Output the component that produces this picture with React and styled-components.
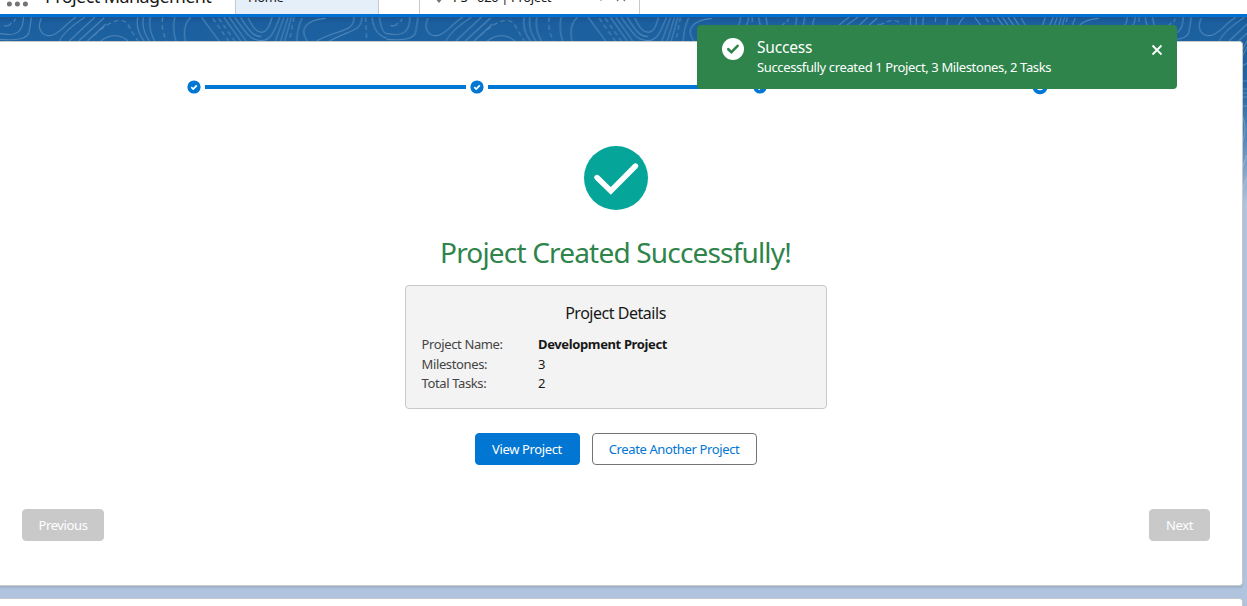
import React from "react";
import styled, { createGlobalStyle, css } from "styled-components";

const Global = createGlobalStyle`
  *, *::before, *::after { box-sizing: border-box; }
  html, body { margin: 0; padding: 0; height: 606px; overflow: hidden; background: #b0c4df; }
  body {
    font-family: "Noto Sans", "Open Sans", sans-serif;
    font-size: 13px;
    line-height: 19.5px;
    letter-spacing: -0.37px;
    color: #181818;
  }
  button { font-family: inherit; }
`;

const Page = styled.div`
  position: relative;
  width: 1247px;
  height: 606px;
  overflow: hidden;
  display: flex;
  flex-direction: column;
`;

const NavBar = styled.header`
  position: relative;
  flex: none;
  height: 17px;
  background: #fff;
  border-bottom: 3px solid #0070d2;
  display: flex;
  align-items: flex-end;
  overflow: hidden;
`;

const NavItem = styled.div`
  flex: none;
  display: flex;
  align-items: center;
  height: 36px;
  width: ${(p) => p.$w}px;
  padding-left: ${(p) => p.$pad || 0}px;
  padding-top: ${(p) => p.$drop || 0}px;
  background: ${(p) => (p.$active ? "#e5effa" : "#fff")};
  border-right: 1px solid #c9c9c9;
  white-space: pre;
  svg { flex: none; }
`;

const Waffle = styled.svg`
  width: 22px;
  height: 22px;
  margin-right: 16px;
`;

const AppName = styled.span`
  font-size: 18px;
  line-height: 24px;
  letter-spacing: -0.6px;
`;

const TabMark = styled.svg`
  width: 10px;
  height: 12px;
  margin-right: 9px;
`;

const TabIcons = styled.span`
  display: flex;
  gap: 10px;
  margin-left: auto;
  padding-right: 13px;
`;

const TabGlyph = styled.svg`
  width: 10px;
  height: 12px;
`;

const Backdrop = styled.svg`
  position: absolute;
  left: 0;
  top: 17px;
  width: 1247px;
  height: 220px;
`;

const Main = styled.main`
  position: relative;
  flex: 1;
  display: flex;
  flex-direction: column;
  gap: 12px;
  padding-top: 24px;
`;

const cardFrame = css`
  flex: none;
  width: 1243px;
  background: #fff;
  border: 1px solid #c9c9c9;
  border-left: 0;
  border-radius: 0 4px 4px 0;
  box-shadow: 0 2px 2px rgba(0, 0, 0, 0.1);
`;

const Card = styled.section`
  ${cardFrame}
  height: 545px;
  display: flex;
  flex-direction: column;
  align-items: center;
`;

const NextCard = styled.section`
  ${cardFrame}
  height: 60px;
`;

const Steps = styled.div`
  align-self: stretch;
  display: flex;
  align-items: center;
  height: 16px;
  margin: 37px 194px 0 187px;
`;

const StepLine = styled.div`
  flex: none;
  width: ${(p) => p.$w || 261}px;
  height: 4px;
  margin: 0 4px;
  background: #0176d3;
`;

const StepIcon = styled.svg`
  flex: none;
  width: ${(p) => p.$size || 14}px;
  height: ${(p) => p.$size || 14}px;
`;

const BigIcon = styled.svg`
  width: 64px;
  height: 64px;
  margin: 51px 11px 0 0;
`;

const Title = styled.h1`
  margin: 25px 11px 0 0;
  font-size: 28px;
  line-height: 35px;
  font-weight: 400;
  color: #2e844a;
  white-space: nowrap;
  letter-spacing: -0.82px;
`;

const Details = styled.div`
  width: 422px;
  height: 124px;
  margin: 15px 11px 0 0;
  padding: 17px 16px 0;
  background: #f3f3f3;
  border: 1px solid #c9c9c9;
  border-radius: 4px;
`;

const DetailsTitle = styled.h2`
  margin: 0 0 12px;
  font-size: 16px;
  line-height: 20px;
  font-weight: 400;
  text-align: center;
  letter-spacing: -0.47px;
`;

const DetailRow = styled.div`
  display: flex;
  height: 19.5px;
`;

const Term = styled.span`
  width: 116.5px;
  color: #444;
`;

const Value = styled.span`
  font-weight: ${(p) => (p.$bold ? 700 : 400)};
`;

const Actions = styled.div`
  display: flex;
  gap: 12px;
  margin: 24px 11px 0 0;
`;

const looks = {
  brand: css`background: #0176d3; border-color: #0176d3; color: #fff;`,
  outline: css`background: #fff; border-color: #747474; color: #0176d3;`,
  disabled: css`background: #c9c9c9; border-color: #c9c9c9; color: #fff;`,
};

const Button = styled.button`
  width: ${(p) => p.$w}px;
  height: 32px;
  padding: 0;
  border: 1px solid;
  border-radius: 4px;
  font-size: 13px;
  line-height: 30px;
  white-space: nowrap;
  letter-spacing: -0.37px;
  ${(p) => looks[p.$look]}
`;

const Footer = styled.footer`
  align-self: stretch;
  display: flex;
  justify-content: space-between;
  margin-top: 44px;
  padding: 0 32px 0 22px;
`;

const Toast = styled.div`
  position: absolute;
  left: 697px;
  top: 25px;
  width: 480px;
  height: 64px;
  display: flex;
  padding: 12px 14px 12px 25px;
  border-radius: 4px;
  background: #2e844a;
  color: #fff;
`;

const ToastIcon = styled.svg`
  width: 22px;
  height: 22px;
  margin: 1px 13px 0 0;
`;

const ToastBody = styled.div`
  flex: 1;
  display: flex;
  flex-direction: column;
`;

const ToastTitle = styled.span`
  font-size: 15.5px;
  line-height: 21px;
  letter-spacing: -0.2px;
`;

const Close = styled.svg`
  width: 12px;
  height: 12px;
  margin-top: 7px;
`;

function CheckDot() {
  return (
    <StepIcon viewBox="0 0 14 14">
      <circle cx="7" cy="7" r="6.6" fill="#0176d3" />
      <path d="M4.3 7.2 6.2 9 9.8 5.3" fill="none" stroke="#fff" strokeWidth="1.7" />
    </StepIcon>
  );
}

function CurrentDot() {
  return (
    <StepIcon $size={16} viewBox="0 0 16 16">
      <circle cx="8" cy="7.5" r="5.8" fill="#fff" stroke="#0176d3" strokeWidth="4" />
    </StepIcon>
  );
}

function Topography() {
  return (
    <Backdrop viewBox="0 0 1247 220">
      <defs>
        <linearGradient id="sky" x1="0" y1="0" x2="0" y2="1">
          <stop offset="0" stopColor="#195594" />
          <stop offset="0.03" stopColor="#1b5f9e" />
          <stop offset="0.3" stopColor="#1f66a5" />
          <stop offset="0.55" stopColor="#5488bd" />
          <stop offset="0.85" stopColor="#b0c4df" />
        </linearGradient>
        <pattern id="contours" width="386.6" height="220" patternUnits="userSpaceOnUse">
          <g transform="scale(.33333) translate(0 -51)" fill="none" stroke="#4b84b8" strokeWidth="3.4">
            <path d="M0 101C50 110 70 96 70 52M0 118C50 122 86 118 88 92Q92 70 94 52" />
            <path d="M12 77Q28 80 34 68M42 66L46 56" />
            <path d="M124 55C108 88 128 108 150 107C178 104 192 74 228 52M178 123Q194 91 254 52M208 123Q245 88 284 52M236 123L312 54M262 123L318 72" />
            <path d="M282 106Q332 61 360 61C388 61 388 92 414 122" strokeDasharray="14 10" />
            <path d="M302 123C330 102 360 102 384 123M413 52Q406 90 432 123M430 52Q424 90 448 123M451 52Q444 88 464 123M524 52Q516 88 528 123M572 52Q546 76 556 123" />
            <path d="M488 52Q482 88 500 123" strokeDasharray="14 10" />
            <path d="M605 52L657 123M672 52L722 123M688 52L738 123M704 52C742 104 752 122 784 122C814 122 822 92 840 52M722 52C754 104 766 110 784 110M744 54C762 88 770 97 786 97C804 94 810 72 816 52" />
            <path d="M638 55L686 123M656 55L704 123M882 52L868 123" strokeDasharray="14 10" />
            <path d="M852 52L826 123M864 52L842 123M874 52L854 123M906 54Q892 84 890 123M976 55C914 60 898 92 922 123" />
            <path d="M950 123C1016 86 1062 98 1062 52M988 123C1060 86 1084 92 1086 52M1116 52C1122 96 1140 118 1190 118M1138 52C1144 88 1150 98 1160 101" />
            <path d="M1097 52L1100 123" strokeDasharray="14 10" />
          </g>
        </pattern>
      </defs>
      <rect width="1247" height="220" fill="url(#sky)" />
      <rect width="1247" height="24" fill="url(#contours)" />
      <path
        d="M1241 36L1247 24M1241 42L1247 30M1241 50L1247 46M1241 64H1247M1241 72H1247M1241 76H1247M1241 80H1247M1241 89H1247M1243 100Q1247 112 1243 124M1241 155L1247 138M1241 178L1247 160"
        fill="none"
        stroke="#fff"
        strokeOpacity="0.22"
        strokeWidth="1.1"
      />
    </Backdrop>
  );
}

export default function App() {
  return (
    <Page>
      <Global />
      <Topography />
      <NavBar>
        <NavItem $w={236} $pad={7}>
          <Waffle viewBox="0 0 22 22" fill="#747474">
            {[2.4, 10.4, 18.4].map((x) =>
              [3, 11, 19].map((y) => <circle key={x + "-" + y} cx={x} cy={y} r="2.5" />)
            )}
          </Waffle>
          <AppName>Project Management</AppName>
        </NavItem>
        <NavItem $w={143} $pad={12} $drop={3} $active>Home</NavItem>
        <NavItem $w={41} />
        <NavItem $w={220} $pad={14} $drop={3}>
          <TabMark viewBox="0 0 10 12">
            <path d="M5 0L9 6 5 11 1 6Z" fill="#747474" />
          </TabMark>
          PS - 020 | Project
          <TabIcons>
            <TabGlyph viewBox="0 0 10 12">
              <path d="M1 4L5 8 9 4" fill="none" stroke="#747474" strokeWidth="1.3" />
            </TabGlyph>
            <TabGlyph viewBox="0 0 10 12">
              <path d="M1 1L9 9M9 1L1 9" stroke="#747474" strokeWidth="1.3" />
            </TabGlyph>
          </TabIcons>
        </NavItem>
      </NavBar>
      <Main>
        <Card>
          <Steps>
            <CheckDot />
            <StepLine />
            <CheckDot />
            <StepLine />
            <CheckDot />
            <StepLine $w={257} />
            <CurrentDot />
          </Steps>
          <BigIcon viewBox="0 0 64 64">
            <circle cx="32" cy="32" r="32" fill="#06a59a" />
            <path d="M13 31.5 26.8 45 51.5 20" fill="none" stroke="#fff" strokeWidth="5.4" strokeLinecap="round" />
          </BigIcon>
          <Title>Project Created Successfully!</Title>
          <Details>
            <DetailsTitle>Project Details</DetailsTitle>
            <DetailRow><Term>Project Name:</Term><Value $bold>Development Project</Value></DetailRow>
            <DetailRow><Term>Milestones:</Term><Value>3</Value></DetailRow>
            <DetailRow><Term>Total Tasks:</Term><Value>2</Value></DetailRow>
          </Details>
          <Actions>
            <Button $look="brand" $w={105}>View Project</Button>
            <Button $look="outline" $w={165}>Create Another Project</Button>
          </Actions>
          <Footer>
            <Button $look="disabled" $w={82}>Previous</Button>
            <Button $look="disabled" $w={61}>Next</Button>
          </Footer>
        </Card>
        <NextCard />
      </Main>
      <Toast>
        <ToastIcon viewBox="0 0 22 22">
          <circle cx="11" cy="11" r="11" fill="#fff" />
          <path d="M6.3 11.2 9.4 14.2 15.6 7.8" fill="none" stroke="#2e844a" strokeWidth="2.6" strokeLinecap="round" />
        </ToastIcon>
        <ToastBody>
          <ToastTitle>Success</ToastTitle>
          <span>Successfully created 1 Project, 3 Milestones, 2 Tasks</span>
        </ToastBody>
        <Close viewBox="0 0 12 12">
          <path d="M1.5 1.5 10.5 10.5M10.5 1.5 1.5 10.5" stroke="#fff" strokeWidth="1.8" />
        </Close>
      </Toast>
    </Page>
  );
}
